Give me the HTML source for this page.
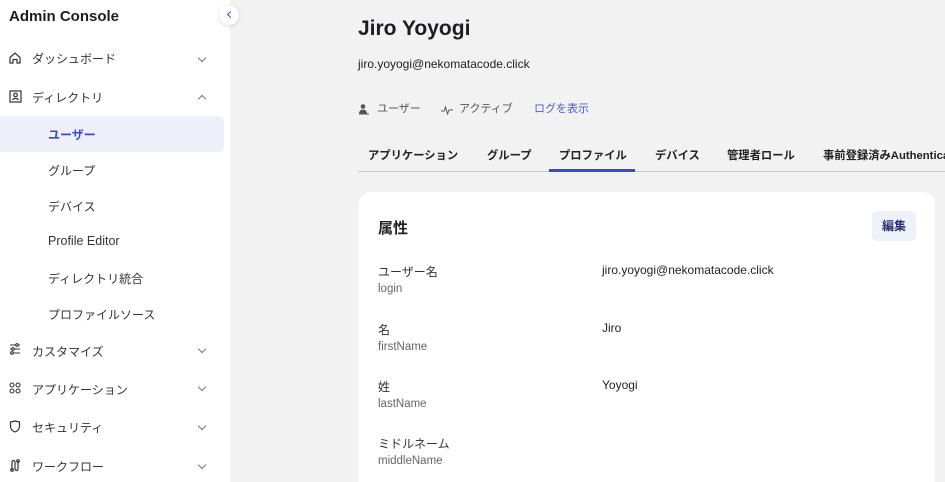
<html style="overflow:hidden;height:482px"><head><style>
body{margin:0;width:945px;height:482px;overflow:hidden;background:#f2f2f2;font-family:"Liberation Sans","Noto Sans CJK JP",sans-serif;color:#222;position:relative}
.sb{position:absolute;left:0;top:0;width:230px;height:482px;background:#fff}
.a{position:absolute;white-space:nowrap}
.t{font-size:12px;color:#333}
.chev{position:absolute;left:199px;width:5px;height:5px;border-right:1.2px solid #777;border-bottom:1.2px solid #777;transform:rotate(45deg)}
.sub{font-size:12px;color:#333;left:48px}
.tab{font-size:11.3px;font-weight:bold;top:147px;color:#222}
.lb{font-size:12px;color:#333;left:378px}
.ls{font-size:11.5px;color:#666;left:378px}
.v{font-size:12px;color:#222;left:602px}
</style></head><body>
<div class="sb">
<div class="a" style="left:9px;top:8px;font-size:15px;font-weight:bold;color:#1d1d21">Admin Console</div>
<svg class="a" style="left:8px;top:51px" width="14" height="14" viewBox="0 0 14 14" fill="none" stroke="#333" stroke-width="1.2"><path d="M2 6.5L7 2l5 4.5V12H9V8.5H5V12H2z"/></svg>
<div class="a t" style="left:32px;top:50px">ダッシュボード</div><div class="chev" style="top:55px"></div>
<svg class="a" style="left:9px;top:90px" width="13" height="13" viewBox="0 0 13 13" fill="none" stroke="#333" stroke-width="1.2"><rect x="1" y="1" width="11" height="11"/><circle cx="6.5" cy="5" r="1.8"/><path d="M3.5 10c1-2 5-2 6 0"/></svg>
<div class="a t" style="left:32px;top:89px">ディレクトリ</div><div class="chev" style="top:96px;transform:rotate(225deg)"></div>
<div class="a" style="left:0;top:116px;width:224px;height:36px;background:#eeeffa;border-radius:0 6px 6px 0"></div>
<div class="a sub" style="top:126px;color:#3b4bc8;font-weight:bold">ユーザー</div>
<div class="a sub" style="top:162px">グループ</div>
<div class="a sub" style="top:198px">デバイス</div>
<div class="a sub" style="top:234px;font-size:12.5px">Profile Editor</div>
<div class="a sub" style="top:270px">ディレクトリ統合</div>
<div class="a sub" style="top:306px">プロファイルソース</div>
<svg class="a" style="left:9px;top:343px" width="12" height="12" viewBox="0 0 12 12" fill="none" stroke="#333" stroke-width="1.1"><path d="M1 2h10M1 6h10M1 10h10"/><circle cx="8" cy="2" r="1.3" fill="#fff"/><circle cx="4" cy="6" r="1.3" fill="#fff"/><circle cx="3" cy="10" r="1.3" fill="#fff"/></svg>
<div class="a t" style="left:32px;top:343px">カスタマイズ</div><div class="chev" style="top:346px"></div>
<svg class="a" style="left:9px;top:382px" width="12" height="12" viewBox="0 0 12 12" fill="none" stroke="#333" stroke-width="1.1"><circle cx="3" cy="3" r="2"/><circle cx="9" cy="3" r="2"/><circle cx="3" cy="9" r="2"/><circle cx="9" cy="9" r="2"/></svg>
<div class="a t" style="left:32px;top:381px">アプリケーション</div><div class="chev" style="top:384px"></div>
<svg class="a" style="left:9px;top:420px" width="12" height="13" viewBox="0 0 12 13" fill="none" stroke="#333" stroke-width="1.2"><path d="M1.5 2L6 1l4.5 1v4c0 3-2 5-4.5 6C3.5 11 1.5 9 1.5 6z"/></svg>
<div class="a t" style="left:32px;top:419px">セキュリティ</div><div class="chev" style="top:423px"></div>
<svg class="a" style="left:9px;top:459px" width="12" height="13" viewBox="0 0 12 13" fill="none" stroke="#333" stroke-width="1.2"><path d="M3 11V3a1.5 1.5 0 013 0v7a1.5 1.5 0 003 0V2"/><circle cx="3" cy="11" r="1.3"/><circle cx="9" cy="2" r="1.3"/></svg>
<div class="a t" style="left:32px;top:458px">ワークフロー</div><div class="chev" style="top:462px"></div>
</div>
<div class="a" style="left:219px;top:5px;width:20px;height:20px;border-radius:50%;background:#fff;box-shadow:0 1px 4px rgba(0,0,0,.15)"></div>
<div class="a" style="left:228px;top:12px;width:4px;height:4px;border-left:1.5px solid #3b4bc8;border-bottom:1.5px solid #3b4bc8;transform:rotate(45deg)"></div>

<div class="a" style="left:358px;top:17px;font-size:21px;font-weight:bold;color:#1d1d21">Jiro Yoyogi</div>
<div class="a" style="left:358px;top:57px;font-size:12px">jiro.yoyogi@nekomatacode.click</div>
<svg class="a" style="left:358px;top:103px" width="12" height="12" viewBox="0 0 12 12" fill="#555"><circle cx="5" cy="3.5" r="2.3"/><path d="M1 11c0-3 1.8-4.5 4-4.5S9 8 9 11z"/><rect x="1" y="10.5" width="10" height="1"/></svg>
<div class="a" style="left:377px;top:100px;font-size:11px;color:#555">ユーザー</div>
<svg class="a" style="left:441px;top:103px" width="12" height="12" viewBox="0 0 12 12" fill="none" stroke="#555" stroke-width="1"><path d="M0 8h3l1.5-4 2 7 1.5-4h4"/></svg>
<div class="a" style="left:459px;top:100px;font-size:11px;color:#555">アクティブ</div>
<div class="a" style="left:534px;top:100px;font-size:11px;color:#4a5bd6">ログを表示</div>

<div class="a tab" style="left:368px">アプリケーション</div>
<div class="a tab" style="left:487px">グループ</div>
<div class="a tab" style="left:559px">プロファイル</div>
<div class="a tab" style="left:655px">デバイス</div>
<div class="a tab" style="left:727px">管理者ロール</div>
<div class="a tab" style="left:823px">事前登録済みAuthenticators</div>
<div class="a" style="left:358px;top:171px;width:587px;height:1px;background:#c8c8c8"></div>
<div class="a" style="left:549px;top:169px;width:86px;height:3px;background:#3b4bc8"></div>

<div class="a" style="left:359px;top:192px;width:576px;height:290px;background:#fff;border-radius:12px 12px 0 0"></div>
<div class="a" style="left:378px;top:217px;font-size:15px;font-weight:bold">属性</div>
<div class="a" style="left:872px;top:211px;width:44px;height:30px;background:#eef0fa;border-radius:5px;font-size:12px;font-weight:bold;color:#2b3070;text-align:center;line-height:30px">編集</div>
<div class="a lb" style="top:263px">ユーザー名</div><div class="a ls" style="top:283px">login</div><div class="a v" style="top:263px">jiro.yoyogi@nekomatacode.click</div>
<div class="a lb" style="top:321px">名</div><div class="a ls" style="top:341px">firstName</div><div class="a v" style="top:321px">Jiro</div>
<div class="a lb" style="top:378px">姓</div><div class="a ls" style="top:398px">lastName</div><div class="a v" style="top:378px">Yoyogi</div>
<div class="a lb" style="top:435px">ミドルネーム</div><div class="a ls" style="top:455px">middleName</div>
</body></html>
